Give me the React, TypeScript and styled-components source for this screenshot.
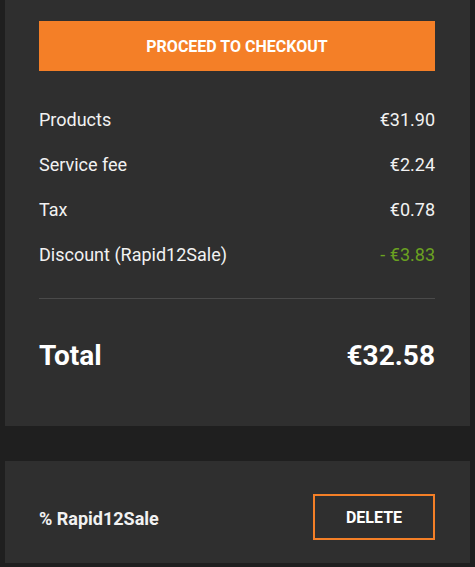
import React from 'react';
import styled, { createGlobalStyle } from 'styled-components';

const GlobalStyle = createGlobalStyle`
  html, body {
    margin: 0;
    padding: 0;
    background: #1f1f1f;
    font-family: Roboto, "Liberation Sans", Arial, sans-serif;
    color: #f2f2f2;
  }
`;

const Page = styled.main`
  padding: 0 5px 4px;
  display: flex;
  flex-direction: column;
  gap: 35px;
`;

const Card = styled.section`
  background: #2f2f2f;
  padding: 21px 35px 41px 34px;
`;

const CheckoutButton = styled.button`
  display: block;
  width: 100%;
  height: 50px;
  border: none;
  background: #f47f27;
  color: #fff;
  font-family: inherit;
  font-size: 16px;
  font-weight: 700;
  text-transform: uppercase;
  cursor: pointer;
`;

const SummaryList = styled.div`
  margin-top: 26px;
  display: flex;
  flex-direction: column;
`;

const Row = styled.div`
  height: 45px;
  display: flex;
  align-items: center;
  justify-content: space-between;
  font-size: 18px;
`;

const Amount = styled.span<{ $discount?: boolean }>`
  color: ${({ $discount }) => ($discount ? '#6aa121' : '#f2f2f2')};
`;

const Divider = styled.hr`
  margin: 21px 0 0;
  border: none;
  height: 1px;
  background: #4a4a4a;
`;

const TotalRow = styled.div`
  margin-top: 26px;
  height: 60px;
  display: flex;
  align-items: center;
  justify-content: space-between;
  font-size: 28px;
  font-weight: 700;
  color: #fff;
`;

const CouponCard = styled.section`
  background: #2f2f2f;
  padding: 33px 35px 23px 34px;
  display: flex;
  align-items: center;
  justify-content: space-between;
`;

const CouponCode = styled.span`
  font-size: 18px;
  font-weight: 700;
  margin-top: 2px;
`;

const DeleteButton = styled.button`
  width: 122px;
  height: 46px;
  background: transparent;
  border: 2px solid #f47f27;
  color: #fff;
  font-family: inherit;
  font-size: 16px;
  font-weight: 700;
  text-transform: uppercase;
  cursor: pointer;
`;

const lines = [
  { label: 'Products', value: '€31.90' },
  { label: 'Service fee', value: '€2.24' },
  { label: 'Tax', value: '€0.78' },
  { label: 'Discount (Rapid12Sale)', value: '- €3.83', discount: true },
];

const App: React.FC = () => (
  <>
    <GlobalStyle />
    <Page>
      <Card>
        <CheckoutButton>Proceed to checkout</CheckoutButton>
        <SummaryList>
          {lines.map((line) => (
            <Row key={line.label}>
              <span>{line.label}</span>
              <Amount $discount={line.discount}>{line.value}</Amount>
            </Row>
          ))}
        </SummaryList>
        <Divider />
        <TotalRow>
          <span>Total</span>
          <span>€32.58</span>
        </TotalRow>
      </Card>
      <CouponCard>
        <CouponCode>% Rapid12Sale</CouponCode>
        <DeleteButton>Delete</DeleteButton>
      </CouponCard>
    </Page>
  </>
);

export default App;
